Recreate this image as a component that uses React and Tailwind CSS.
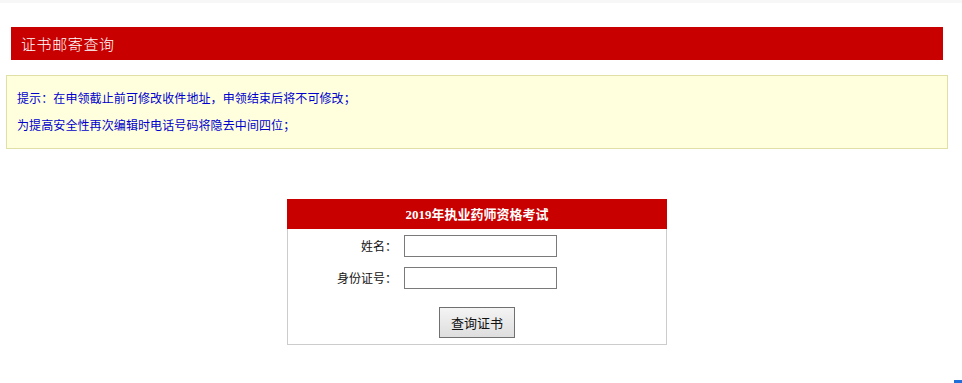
export default function App() {
  const cjk = { fontFamily: '"Noto Sans CJK SC", "Liberation Sans", sans-serif' };
  return (
    <div className="relative w-[962px] h-[383px] bg-white overflow-hidden" style={cjk}>
      <div className="h-[3px] bg-[#f7f7f7]" />
      <div className="mt-[24px] ml-[11px] w-[932px] h-[33px] bg-[#c80000] flex items-center pl-[10px] text-white text-[15px] tracking-[0.6px] leading-none font-light">
        证书邮寄查询
      </div>
      <div className="mt-[15px] ml-[6px] w-[942px] h-[74px] border border-[#e0e0a6] bg-[#ffffdd] pl-[10px] pt-[16px] text-[#0000cc] text-[12px] tracking-[0.1px] leading-none flex flex-col gap-[15px]">
        <div>提示：在申领截止前可修改收件地址，申领结束后将不可修改；</div>
        <div>为提高安全性再次编辑时电话号码将隐去中间四位；</div>
      </div>
      <div className="mt-[50px] ml-[287px] w-[380px] border-x border-b border-[#cccccc]">
        <div
          className="-mx-px h-[30px] bg-[#c80000] flex items-center justify-center text-white text-[13px] font-bold leading-none"
          style={{ fontFamily: '"Liberation Serif", "Noto Sans CJK SC", serif' }}
        >
          2019年执业药师资格考试
        </div>
        <div className="pt-[6px] pb-[6px] flex flex-col">
          <div className="flex items-center h-[22px]">
            <div className="w-[109px] text-right text-[12px] text-[#111] leading-none">姓名：</div>
            <input className="ml-[7px] w-[153px] h-[22px] border border-[#7a7a7a] bg-white outline-none" />
          </div>
          <div className="mt-[10px] flex items-center h-[22px]">
            <div className="w-[109px] text-right text-[12px] text-[#111] leading-none">身份证号：</div>
            <input className="ml-[7px] w-[153px] h-[22px] border border-[#7a7a7a] bg-white outline-none" />
          </div>
          <div className="mt-[18px] flex justify-center">
            <button className="w-[76px] h-[31px] border border-[#707070] bg-gradient-to-b from-[#f4f4f4] to-[#dedede] text-[13px] text-[#111] leading-none">
              查询证书
            </button>
          </div>
        </div>
      </div>
      <div className="absolute right-0 bottom-0 w-[8px] h-[3px] bg-[#1e6fd9]" />
    </div>
  );
}
